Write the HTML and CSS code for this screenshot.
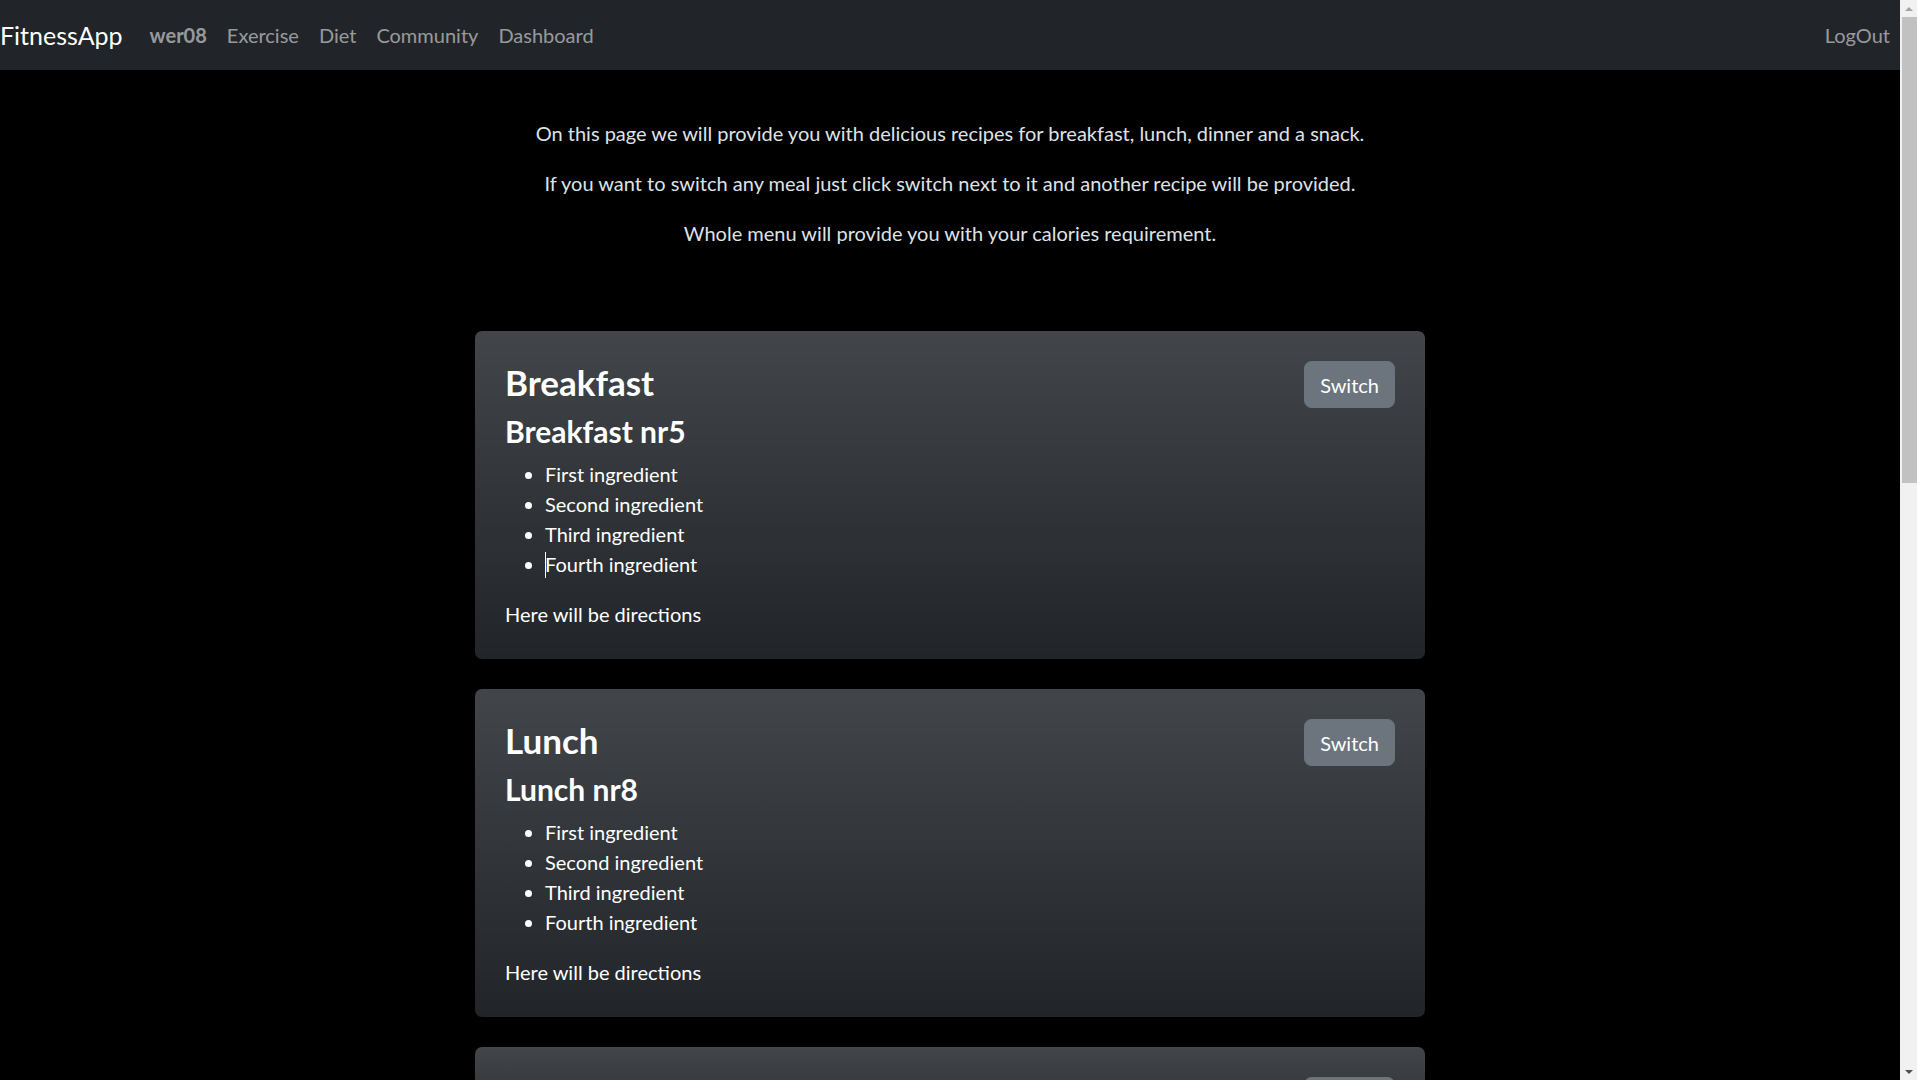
FILE: index.html
```html
<!DOCTYPE html>
<html lang="en">
<head>
<meta charset="utf-8">
<title>FitnessApp - Diet</title>
<link rel="stylesheet" href="styles.css">
</head>
<body>
<div class="app">
  <nav class="navbar">
    <a class="brand" href="#">FitnessApp</a>
    <ul class="nav-links">
      <li><a class="nav-link user" href="#">wer08</a></li>
      <li><a class="nav-link" href="#">Exercise</a></li>
      <li><a class="nav-link" href="#">Diet</a></li>
      <li><a class="nav-link" href="#">Community</a></li>
      <li><a class="nav-link" href="#">Dashboard</a></li>
    </ul>
    <a class="nav-link logout" href="#">LogOut</a>
  </nav>

  <main class="page">
    <section class="intro">
      <p>On this page we will provide you with delicious recipes for breakfast, lunch, dinner and a snack.</p>
      <p>If you want to switch any meal just click switch next to it and another recipe will be provided.</p>
      <p>Whole menu will provide you with your calories requirement.</p>
    </section>

    <section class="meals">
      <article class="meal-card">
        <div class="meal-body">
          <h3 class="meal-title">Breakfast</h3>
          <h4 class="recipe-name">Breakfast nr5</h4>
          <ul class="ingredients">
            <li>First ingredient</li>
            <li>Second ingredient</li>
            <li>Third ingredient</li>
            <li><span class="caret"></span>Fourth ingredient</li>
          </ul>
          <p class="directions">Here will be directions</p>
        </div>
        <button class="switch-btn" type="button">Switch</button>
      </article>

      <article class="meal-card">
        <div class="meal-body">
          <h3 class="meal-title">Lunch</h3>
          <h4 class="recipe-name">Lunch nr8</h4>
          <ul class="ingredients">
            <li>First ingredient</li>
            <li>Second ingredient</li>
            <li>Third ingredient</li>
            <li>Fourth ingredient</li>
          </ul>
          <p class="directions">Here will be directions</p>
        </div>
        <button class="switch-btn" type="button">Switch</button>
      </article>

      <article class="meal-card">
        <div class="meal-body">
          <h3 class="meal-title">Dinner</h3>
        </div>
        <button class="switch-btn" type="button">Switch</button>
      </article>
    </section>
  </main>
</div>

<div class="scrollbar" aria-hidden="true">
  <div class="sb-button"><span class="sb-arrow-up"></span></div>
  <div class="sb-thumb"></div>
  <div class="sb-track"></div>
  <div class="sb-button"><span class="sb-arrow-down"></span></div>
</div>
</body>
</html>
```
FILE: styles.css
```css
* {
  box-sizing: border-box;
}

html,
body {
  height: 100%;
}

body {
  margin: 0;
  display: flex;
  overflow: hidden;
  background: #000;
  color: #dee2e6;
  font-family: Lato, "Liberation Sans", sans-serif;
  font-size: 20px;
  line-height: 30px;
}

.app {
  flex: 1;
  min-width: 0;
  height: 100%;
  overflow: hidden;
}

/* ---------- fake browser scrollbar ---------- */
.scrollbar {
  flex: none;
  width: 17px;
  height: 100%;
  background: #f1f1f1;
  display: flex;
  flex-direction: column;
}

.sb-button {
  height: 17px;
  display: flex;
  align-items: center;
  justify-content: center;
}

.sb-arrow-up {
  width: 0;
  height: 0;
  border-left: 4px solid transparent;
  border-right: 4px solid transparent;
  border-bottom: 4px solid #a3a3a3;
}

.sb-arrow-down {
  width: 0;
  height: 0;
  border-left: 4px solid transparent;
  border-right: 4px solid transparent;
  border-top: 4px solid #505050;
}

.sb-thumb {
  height: 466px;
  margin: 0 0 0 2px;
  background: #c1c1c1;
}

.sb-track {
  flex: 1;
}

/* ---------- navbar ---------- */
.navbar {
  height: 70px;
  background: #212529;
  display: flex;
  align-items: center;
  padding: 0;
}

.brand {
  font-size: 25px;
  line-height: 37px;
  color: #fff;
  text-decoration: none;
  margin-right: 17px;
}

.nav-links {
  display: flex;
  list-style: none;
  margin: 0;
  padding: 0;
}

.nav-link {
  display: block;
  padding: 10px 10px;
  color: rgba(255, 255, 255, 0.55);
  text-decoration: none;
  font-size: 20px;
  line-height: 30px;
}

.nav-link.user {
  font-weight: 700;
}

.logout {
  margin-left: auto;
}

/* ---------- intro ---------- */
.page {
  padding: 48px 0 0;
}

.intro {
  text-align: center;
}

.intro p {
  margin: 0 0 20px;
}

.intro p:last-child {
  margin-bottom: 0;
}

/* ---------- meal cards ---------- */
.meals {
  width: 50%;
  margin: 83px auto 0;
  display: flex;
  flex-direction: column;
  gap: 30px;
}

.meal-card {
  display: flex;
  justify-content: space-between;
  align-items: flex-start;
  padding: 30px;
  border-radius: 7px;
  color: #fff;
  background-color: #212529;
  background-image: linear-gradient(180deg, rgba(255, 255, 255, 0.15), rgba(255, 255, 255, 0));
}

.meal-title {
  margin: 0 0 10px;
  font-size: 35px;
  line-height: 42px;
  font-weight: 700;
}

.recipe-name {
  margin: 0 0 10px;
  font-size: 30px;
  line-height: 36px;
  font-weight: 700;
}

.ingredients {
  margin: 0 0 20px;
  padding-left: 40px;
}

.caret {
  display: inline-block;
  width: 1px;
  height: 26px;
  margin-right: -1px;
  background: #fff;
  vertical-align: -6px;
}

.directions {
  margin: 0;
}

.switch-btn {
  font-family: inherit;
  font-size: 20px;
  line-height: 30px;
  color: #fff;
  background: #6c757d;
  border: 1px solid #6c757d;
  border-radius: 7.5px;
  padding: 7.5px 15px;
  cursor: pointer;
}
```
